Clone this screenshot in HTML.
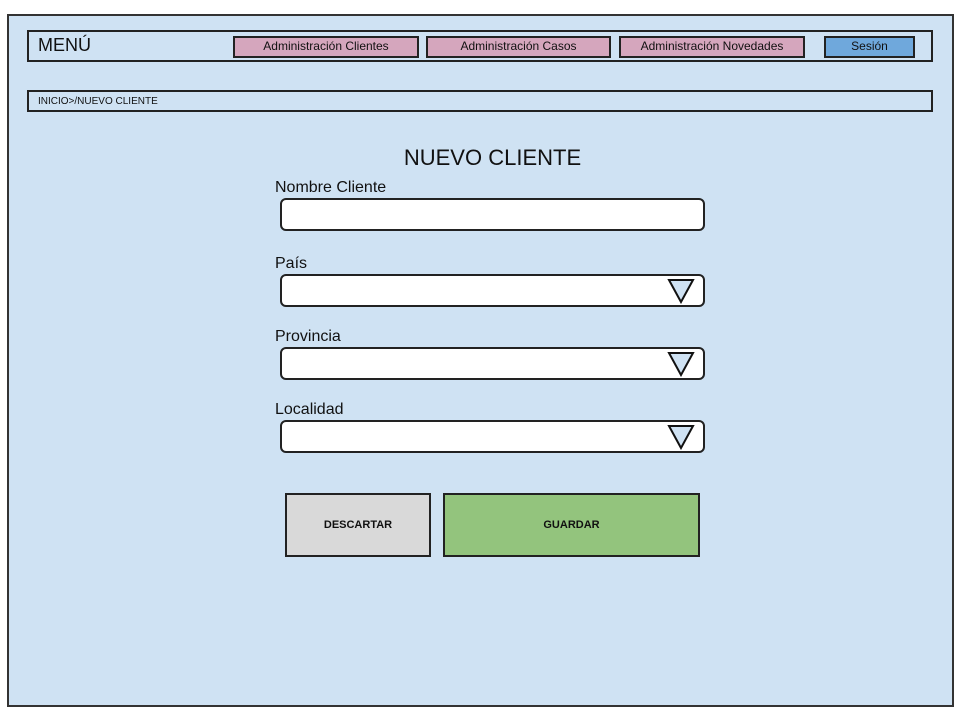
<!DOCTYPE html>
<html><head><meta charset="utf-8"><style>
*{box-sizing:border-box;margin:0;padding:0}
body{width:960px;height:720px;background:#fff;position:relative;overflow:hidden;font-family:"Liberation Sans",Arial,sans-serif;color:#111}
.a{position:absolute}
.frame{left:7px;top:14px;width:947px;height:693px;background:#cfe2f3;border:2px solid #333}
.bar{border:2px solid #222;background:#cfe2f3}
.btn{border:2px solid #222;background:#d5a6bd;font-size:12px;text-align:center;line-height:17px}
.inp{left:280px;width:425px;height:33px;background:#fff;border:2px solid #222;border-radius:6px}
.lbl{left:275px;font-size:16px}
.tri{position:absolute;right:8px;top:1px}
</style></head><body>
<div class="a frame"></div>
<div class="a bar" style="left:27px;top:30px;width:906px;height:32px"></div>
<div class="a" style="left:38px;top:35px;font-size:18px">MENÚ</div>
<div class="a btn" style="left:233px;top:36px;width:186px;height:22px">Administración Clientes</div>
<div class="a btn" style="left:426px;top:36px;width:185px;height:22px">Administración Casos</div>
<div class="a btn" style="left:619px;top:36px;width:186px;height:22px">Administración Novedades</div>
<div class="a btn" style="left:824px;top:36px;width:91px;height:22px;background:#6fa8dc">Sesión</div>
<div class="a bar" style="left:27px;top:90px;width:906px;height:22px"></div>
<div class="a" style="left:38px;top:96px;font-size:10px">INICIO&gt;/NUEVO CLIENTE</div>
<div class="a" style="left:280px;width:425px;top:145px;font-size:22px;text-align:center">NUEVO CLIENTE</div>
<div class="a lbl" style="top:179px">Nombre Cliente</div>
<div class="a inp" style="top:198px"></div>
<div class="a lbl" style="top:255px">País</div>
<div class="a inp" style="top:274px"><svg class="tri" width="28" height="27"><polygon points="2,3 26,3 14,25" fill="#cfe2f3" stroke="#111" stroke-width="2"/></svg></div>
<div class="a lbl" style="top:328px">Provincia</div>
<div class="a inp" style="top:347px"><svg class="tri" width="28" height="27"><polygon points="2,3 26,3 14,25" fill="#cfe2f3" stroke="#111" stroke-width="2"/></svg></div>
<div class="a lbl" style="top:401px">Localidad</div>
<div class="a inp" style="top:420px"><svg class="tri" width="28" height="27"><polygon points="2,3 26,3 14,25" fill="#cfe2f3" stroke="#111" stroke-width="2"/></svg></div>
<div class="a" style="left:285px;top:493px;width:146px;height:64px;background:#d9d9d9;border:2px solid #222;font-size:11px;font-weight:bold;text-align:center;line-height:60px">DESCARTAR</div>
<div class="a" style="left:443px;top:493px;width:257px;height:64px;background:#93c47d;border:2px solid #222;font-size:11px;font-weight:bold;text-align:center;line-height:60px">GUARDAR</div>
</body></html>
